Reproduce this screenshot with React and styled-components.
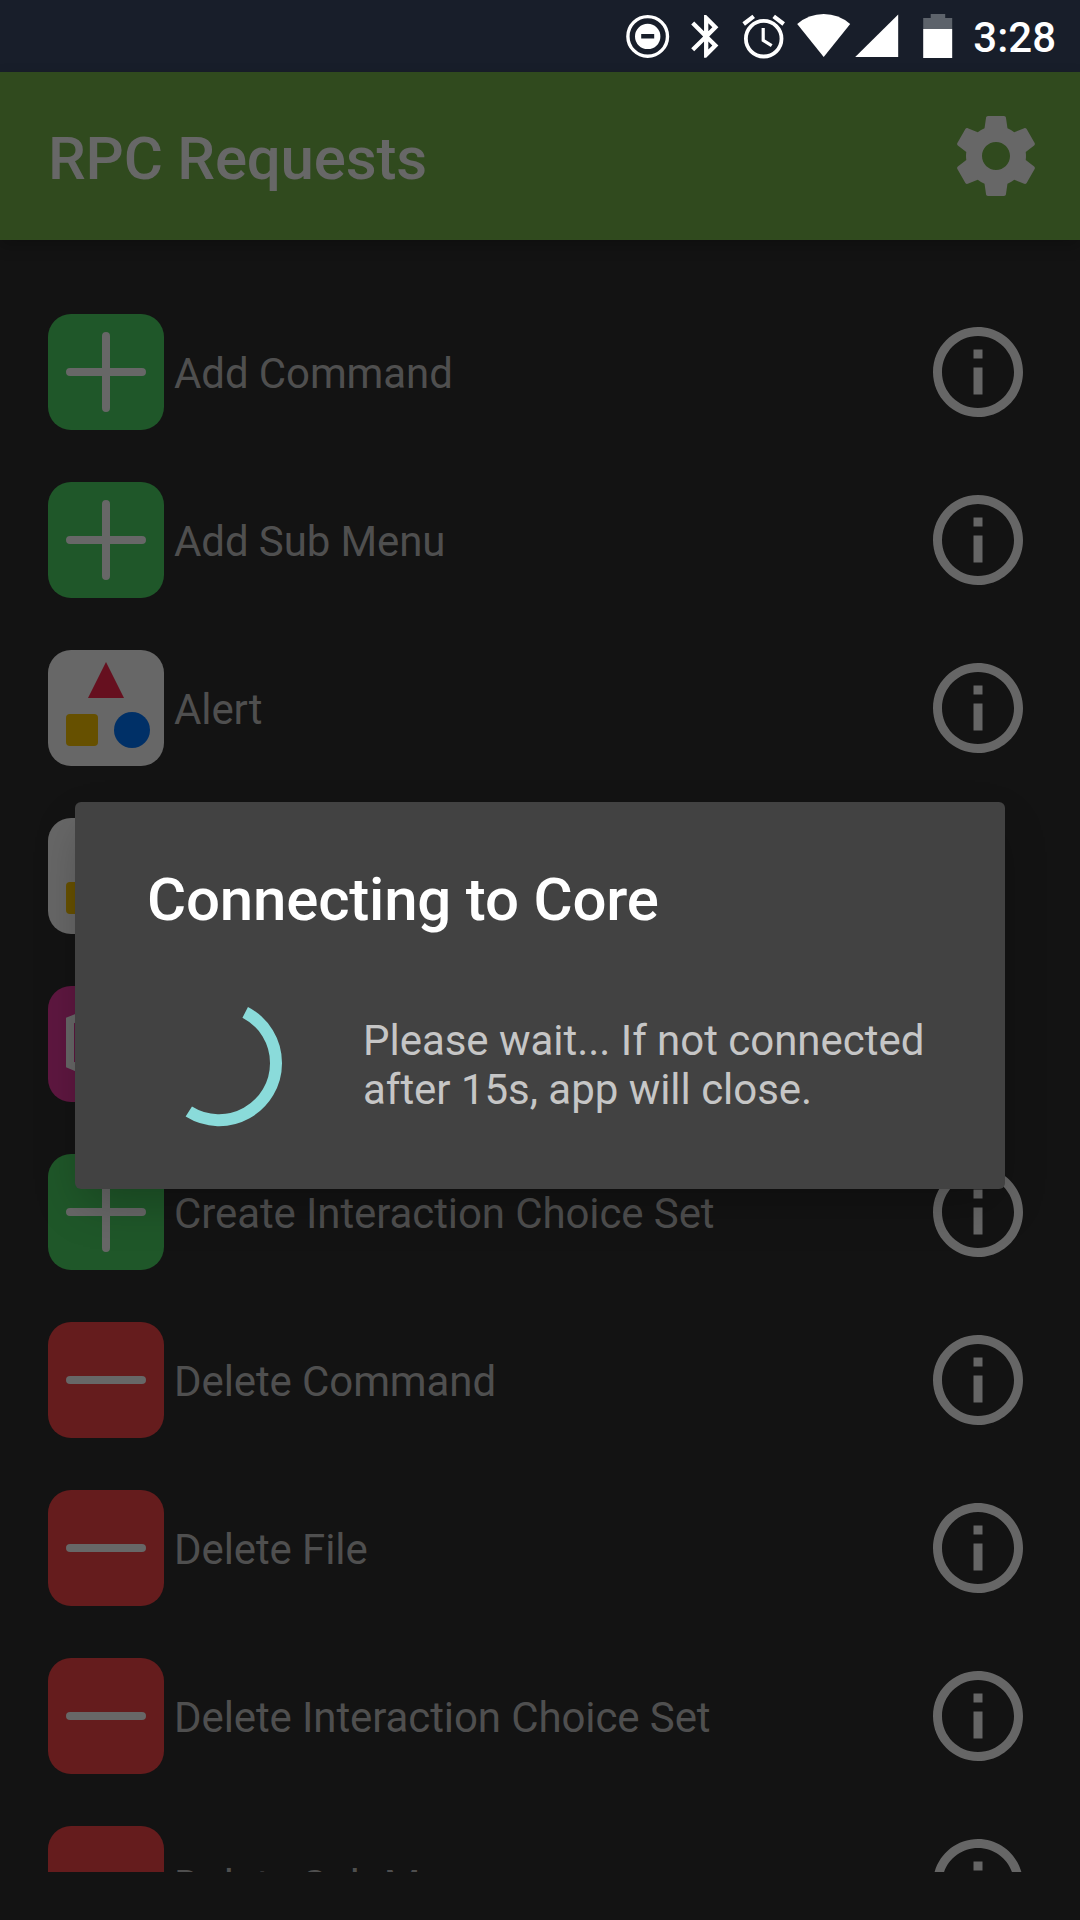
import React from "react";
import styled, { createGlobalStyle } from "styled-components";

const GlobalStyle = createGlobalStyle`
  * { box-sizing: border-box; }
  body { margin: 0; background: #131313; }
`;

const Screen = styled.div`
  position: relative;
  display: flex;
  flex-direction: column;
  width: 1080px;
  height: 1920px;
  overflow: hidden;
  background: #131313;
  font-family: Roboto, "Liberation Sans", sans-serif;
`;

const StatusBar = styled.header`
  display: flex;
  flex: none;
  align-items: center;
  justify-content: flex-end;
  height: 72px;
  padding-right: 24px;
  background: #181e2a;
  color: #fff;
`;

const StatusIcon = styled.svg`
  flex: none;
  width: ${(p) => p.$w}px;
  height: 72px;
  fill: #fff;
`;

const Clock = styled.time`
  padding-top: 4px;
  font-size: 42px;
  line-height: 50px;
  font-weight: 500;
`;

const AppBar = styled.div`
  z-index: 1;
  display: flex;
  flex: none;
  align-items: center;
  justify-content: space-between;
  height: 168px;
  padding: 0 36px 0 48px;
  background: #304a1e;
  box-shadow: 0 6px 14px rgba(0, 0, 0, 0.22);
`;

const AppTitle = styled.h1`
  margin: 0;
  padding-top: 5px;
  font-size: 60px;
  line-height: 70px;
  font-weight: 500;
  letter-spacing: -0.2px;
  color: #676767;
`;

const GearIcon = styled.svg`
  width: 96px;
  height: 96px;
  fill: #676767;
`;

const List = styled.ul`
  flex: none;
  height: 1632px;
  margin: 0;
  padding: 48px 48px 0;
  overflow: hidden;
  list-style: none;
`;

const Row = styled.li`
  display: flex;
  align-items: center;
  height: 168px;
`;

const RowIcon = styled.svg`
  flex: none;
  width: 116px;
  height: 116px;
  border-radius: 23px;
  background: ${(p) => p.$bg};
`;

const RowLabel = styled.span`
  flex: 1;
  padding: 3px 0 0 10px;
  font-size: 42px;
  line-height: 50px;
  letter-spacing: -0.1px;
  color: #4f4f4f;
  white-space: nowrap;
`;

const InfoIcon = styled.svg`
  flex: none;
  width: 108px;
  height: 108px;
  fill: #666;
`;

const Dialog = styled.section`
  position: absolute;
  z-index: 2;
  left: 75px;
  top: 802px;
  width: 930px;
  height: 387px;
  padding: 63px 72px 0;
  border-radius: 6px;
  background: #424242;
  box-shadow: 0 20px 44px -8px rgba(0, 0, 0, 0.25);
`;

const DialogTitle = styled.h2`
  margin: 0;
  font-size: 60px;
  line-height: 70px;
  font-weight: 500;
  letter-spacing: -0.2px;
  color: #fff;
`;

const DialogBody = styled.div`
  display: flex;
  align-items: center;
  gap: 72px;
  margin-top: 56px;
`;

const Spinner = styled.svg`
  flex: none;
  width: 144px;
  height: 144px;
`;

const Message = styled.p`
  margin: 0;
  padding-top: 4px;
  font-size: 42px;
  line-height: 49px;
  letter-spacing: -0.03px;
  color: #c6c6c6;
`;

const glyphs = {
  plus: {
    bg: "#1f5729",
    art: <path d="M22 58H94M58 22V94" stroke="#676767" strokeWidth="8" strokeLinecap="round" />,
  },
  minus: {
    bg: "#651c1d",
    art: <path d="M22 58H94" stroke="#676767" strokeWidth="8" strokeLinecap="round" />,
  },
  shapes: {
    bg: "#676767",
    art: (
      <>
        <path d="M58 12L76 48H40Z" fill="#66101f" />
        <rect x="18" y="64" width="32" height="32" rx="4" fill="#665000" />
        <circle cx="84" cy="80" r="18" fill="#003067" />
      </>
    ),
  },
  hexagon: {
    bg: "#5e1740",
    art: <path d="M22 34.500L58 20L94 34.500V78.500L58 94L22 78.500Z" fill="none" stroke="#676767" strokeWidth="8" />,
  },
};

const requests = [
  { glyph: "plus", label: "Add Command" },
  { glyph: "plus", label: "Add Sub Menu" },
  { glyph: "shapes", label: "Alert" },
  { glyph: "shapes" },
  { glyph: "hexagon" },
  { glyph: "plus", label: "Create Interaction Choice Set" },
  { glyph: "minus", label: "Delete Command" },
  { glyph: "minus", label: "Delete File" },
  { glyph: "minus", label: "Delete Interaction Choice Set" },
  { glyph: "minus", label: "Delete Sub Menu" },
];

function RequestRow({ glyph, label }) {
  const { bg, art } = glyphs[glyph];
  return (
    <Row>
      <RowIcon $bg={bg} viewBox="0 0 116 116">{art}</RowIcon>
      {label && <RowLabel>{label}</RowLabel>}
      {label && <InfoButton />}
    </Row>
  );
}

function InfoButton() {
  return (
    <InfoIcon viewBox="0 0 24 24">
      <path d="M11 17h2v-6h-2v6zm1-15C6.480 2 2 6.480 2 12s4.480 10 10 10 10-4.480 10-10S17.520 2 12 2zm0 18c-4.410 0-8-3.590-8-8s3.590-8 8-8 8 3.590 8 8-3.590 8-8 8zM11 9h2V7h-2v2z" />
    </InfoIcon>
  );
}

function StatusIcons() {
  return (
    <StatusIcon $w={350} viewBox="622.8 0 350 72">
      <circle cx="647.5" cy="36.400" r="19.800" fill="none" stroke="#fff" strokeWidth="3.400" />
      <path fillRule="evenodd" d="M647.500 23.700a12.700 12.700 0 1 0 0 25.400a12.700 12.700 0 1 0 0-25.400zM641 34h13v4.600h-13z" />
      <path transform="translate(680.300 10.700) scale(2.140)" d="M17.710 7.710L12 2h-1v7.590L6.410 5 5 6.410 10.590 12 5 17.590 6.410 19 11 14.410V22h1l5.710-5.710-4.300-4.290 4.300-4.290zM13 5.830l1.880 1.880L13 9.590V5.830zm1.880 10.460L13 18.170v-3.760l1.880 1.880z" />
      <circle cx="763.500" cy="38.700" r="17.800" fill="none" stroke="#fff" strokeWidth="3.800" />
      <path d="M763 28V40.300L771.500 45.600" fill="none" stroke="#fff" strokeWidth="3.200" />
      <path d="M743.500 24L753.500 16.300M783.500 24L773.500 16.300" fill="none" stroke="#fff" strokeWidth="4.200" />
      <path d="M823.500 57L797 24Q808.500 14 823.500 14T850 24Z" />
      <path d="M855 57H898V14.500Z" />
      <path d="M923 18H930.500V14H945V18H952V29H923Z" fill="#5d636b" />
      <rect x="923" y="29" width="29" height="29" />
    </StatusIcon>
  );
}

export default function App() {
  return (
    <>
      <GlobalStyle />
      <Screen>
        <StatusBar>
          <StatusIcons />
          <Clock>3:28</Clock>
        </StatusBar>
        <AppBar>
          <AppTitle>RPC Requests</AppTitle>
          <GearIcon viewBox="0 0 24 24">
            <path d="M19.430 12.980c.04-.32.07-.64.07-.98s-.03-.66-.07-.98l2.110-1.650c.19-.15.24-.42.12-.64l-2-3.460c-.12-.22-.39-.3-.61-.22l-2.490 1c-.52-.4-1.080-.73-1.690-.98l-.38-2.650C14.460 2.180 14.250 2 14 2h-4c-.25 0-.46.18-.49.42l-.38 2.650c-.61.25-1.170.59-1.690.98l-2.490-1c-.23-.09-.49 0-.61.22l-2 3.460c-.13.22-.07.49.12.64l2.110 1.650c-.04.32-.07.65-.07.98s.03.66.07.98l-2.110 1.650c-.19.15-.24.42-.12.64l2 3.460c.12.22.39.3.61.22l2.490-1c.52.4 1.080.73 1.690.98l.38 2.650c.03.24.24.42.49.42h4c.25 0 .46-.18.49-.42l.38-2.650c.61-.25 1.170-.59 1.690-.98l2.490 1c.23.09.49 0 .61-.22l2-3.460c.12-.22.07-.49-.12-.64l-2.110-1.650zM12 15.500c-1.930 0-3.500-1.570-3.500-3.500s1.570-3.500 3.500-3.500 3.500 1.570 3.500 3.500-1.570 3.500-3.500 3.500z" />
          </GearIcon>
        </AppBar>
        <List>
          {requests.map(({ glyph, label }, i) => (
            <RequestRow key={i} glyph={glyph} label={label} />
          ))}
        </List>
        <Dialog>
          <DialogTitle>Connecting to Core</DialogTitle>
          <DialogBody>
            <Spinner viewBox="0 0 144 144">
              <path d="M98.200 21.300A57 57 0 0 1 129 72A57 57 0 0 1 41.800 120.500" fill="none" stroke="#8adbda" strokeWidth="12" strokeLinejoin="round" />
            </Spinner>
            <Message>Please wait... If not connected after 15s, app will close.</Message>
          </DialogBody>
        </Dialog>
      </Screen>
    </>
  );
}
